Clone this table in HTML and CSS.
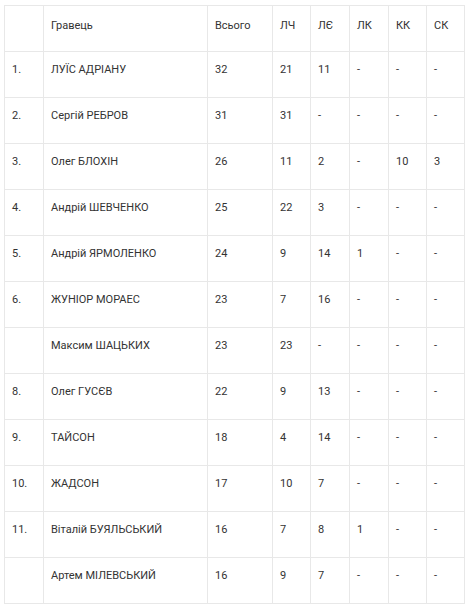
FILE: index.html
```html
<!DOCTYPE html>
<html lang="uk">
<head>
<meta charset="utf-8">
<link rel="stylesheet" href="styles.css">
</head>
<body>
<div class="wrap">
<table class="stats">
<colgroup>
<col class="c-num"><col class="c-name"><col class="c-total"><col class="c-lch"><col class="c-lye"><col class="c-lk"><col class="c-kk"><col class="c-sk">
</colgroup>
<thead>
<tr><th></th><th>Гравець</th><th>Всього</th><th>ЛЧ</th><th>ЛЄ</th><th>ЛК</th><th>КК</th><th>СК</th></tr>
</thead>
<tbody>
<tr><td>1.</td><td>ЛУЇС АДРІАНУ</td><td>32</td><td>21</td><td>11</td><td>-</td><td>-</td><td>-</td></tr>
<tr><td>2.</td><td>Сергій РЕБРОВ</td><td>31</td><td>31</td><td>-</td><td>-</td><td>-</td><td>-</td></tr>
<tr><td>3.</td><td>Олег БЛОХІН</td><td>26</td><td>11</td><td>2</td><td>-</td><td>10</td><td>3</td></tr>
<tr><td>4.</td><td>Андрій ШЕВЧЕНКО</td><td>25</td><td>22</td><td>3</td><td>-</td><td>-</td><td>-</td></tr>
<tr><td>5.</td><td>Андрій ЯРМОЛЕНКО</td><td>24</td><td>9</td><td>14</td><td>1</td><td>-</td><td>-</td></tr>
<tr><td>6.</td><td>ЖУНІОР МОРАЕС</td><td>23</td><td>7</td><td>16</td><td>-</td><td>-</td><td>-</td></tr>
<tr><td></td><td>Максим ШАЦЬКИХ</td><td>23</td><td>23</td><td>-</td><td>-</td><td>-</td><td>-</td></tr>
<tr><td>8.</td><td>Олег ГУСЄВ</td><td>22</td><td>9</td><td>13</td><td>-</td><td>-</td><td>-</td></tr>
<tr><td>9.</td><td>ТАЙСОН</td><td>18</td><td>4</td><td>14</td><td>-</td><td>-</td><td>-</td></tr>
<tr><td>10.</td><td>ЖАДСОН</td><td>17</td><td>10</td><td>7</td><td>-</td><td>-</td><td>-</td></tr>
<tr><td>11.</td><td>Віталій БУЯЛЬСЬКИЙ</td><td>16</td><td>7</td><td>8</td><td>1</td><td>-</td><td>-</td></tr>
<tr><td></td><td>Артем МІЛЕВСЬКИЙ</td><td>16</td><td>9</td><td>7</td><td>-</td><td>-</td><td>-</td></tr>
</tbody>
</table>
</div>
</body>
</html>
```
FILE: styles.css
```css
html, body {
  margin: 0;
  padding: 0;
  background: #fff;
}
.wrap {
  padding: 5px 0 0 4px;
}
.stats {
  border-collapse: collapse;
  table-layout: fixed;
  width: 460px;
  font-family: Roboto, "Noto Sans", sans-serif;
  font-size: 11px;
  color: #333;
}
.c-num { width: 39px; }
.c-name { width: 164px; }
.c-total { width: 65px; }
.c-lch { width: 38px; }
.c-lye { width: 39px; }
.c-lk { width: 39px; }
.c-kk { width: 38px; }
.c-sk { width: 38px; }
.stats th, .stats td {
  border: 1px solid #e8e8e8;
  height: 45px;
  box-sizing: border-box;
  padding: 10px 7px 19px;
  line-height: 16px;
  text-align: left;
  vertical-align: top;
  font-weight: normal;
}
.stats th {
  padding-top: 12px;
  padding-bottom: 17px;
}
```
